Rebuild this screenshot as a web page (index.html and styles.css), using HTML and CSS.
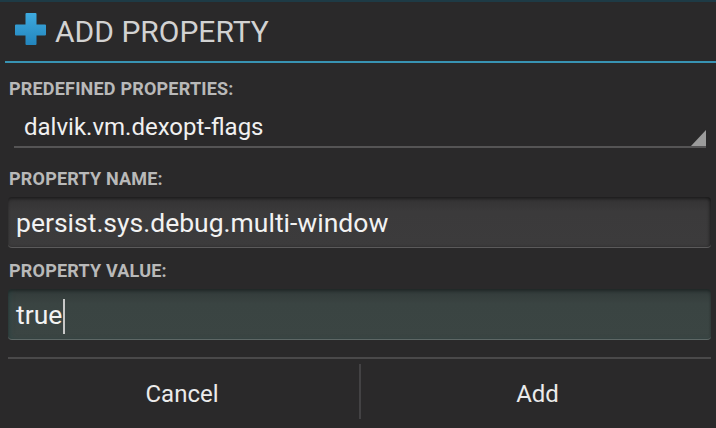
FILE: index.html
```html
<!DOCTYPE html>
<html>
<head>
<meta charset="utf-8">
<link rel="stylesheet" href="styles.css">
</head>
<body>
<div class="dialog">
  <div class="title-bar">
    <svg class="plus-icon" width="32" height="32" viewBox="0 0 32 32">
      <defs>
        <linearGradient id="pg" x1="0" y1="0" x2="0" y2="1">
          <stop offset="0" stop-color="#3eaadf"/>
          <stop offset="1" stop-color="#2385bd"/>
        </linearGradient>
      </defs>
      <path d="M10.5 1 Q10.5 0 11.5 0 H20.5 Q21.5 0 21.5 1 V11.5 H30 Q31 11.5 31 12.5 V21.5 Q31 22.5 30 22.5 H21.5 V31 Q21.5 32 20.5 32 H11.5 Q10.5 32 10.5 31 V22.5 H1 Q0 22.5 0 21.5 V12.5 Q0 11.5 1 11.5 H10.5 Z" fill="url(#pg)"/>
    </svg>
    <span class="title">ADD PROPERTY</span>
  </div>
  <div class="title-divider"></div>
  <div class="content">
    <div class="label label-first">PREDEFINED PROPERTIES:</div>
    <div class="spinner">
      <span class="spinner-text">dalvik.vm.dexopt-flags</span>
      <span class="spinner-arrow"></span>
    </div>
    <div class="label label-after-spinner">PROPERTY NAME:</div>
    <div class="field">persist.sys.debug.multi-window</div>
    <div class="label label-after-field">PROPERTY VALUE:</div>
    <div class="field field-focused">true<span class="cursor"></span></div>
  </div>
  <div class="button-divider"></div>
  <div class="buttons">
    <button class="btn btn-left">Cancel</button>
    <span class="btn-sep"></span>
    <button class="btn btn-right">Add</button>
  </div>
</div>
</body>
</html>
```
FILE: styles.css
```css
html, body {
  margin: 0;
  padding: 0;
  background: #2a292a;
}
body {
  width: 716px;
  height: 428px;
  overflow: hidden;
  font-family: Roboto, "Liberation Sans", sans-serif;
}
.dialog {
  display: flex;
  flex-direction: column;
  height: 428px;
  box-sizing: border-box;
  border-top: 2px solid #1e3b46;
}
.title-bar {
  height: 59px;
  box-sizing: border-box;
  display: flex;
  align-items: flex-start;
  padding: 11px 0 0 15px;
  gap: 8px;
}
.plus-icon {
  display: block;
  flex: none;
}
.title {
  font-size: 30px;
  line-height: 36px;
  margin-top: 1px;
  color: #d2d2d2;
  font-weight: 400;
}
.title-divider {
  height: 2px;
  margin-left: 5px;
  background: #3893b3;
}
.content {
  padding: 0 5px 0 8px;
}
.label {
  font-size: 18px;
  line-height: 20px;
  font-weight: 700;
  letter-spacing: 0.2px;
  color: #b9b9b9;
  padding-left: 1px;
}
.label-first { margin-top: 16px; }
.label-after-spinner { margin-top: 21px; }
.label-after-field { margin-top: 13px; }
.spinner {
  display: flex;
  align-items: flex-end;
  justify-content: space-between;
  margin: 0 5px 0 6px;
  padding: 13px 0 0 10px;
  border-bottom: 2px solid #555455;
}
.spinner-text {
  font-size: 24px;
  line-height: 30px;
  color: #f0f0f0;
  padding-bottom: 4px;
}
.spinner-arrow {
  width: 15px;
  height: 16px;
  background: #9b9b9b;
  clip-path: polygon(100% 0, 100% 100%, 0 100%);
}
.field {
  margin-top: 8px;
  height: 51px;
  box-sizing: border-box;
  padding: 11px 0 0 8px;
  font-size: 26.5px;
  line-height: 30px;
  color: #f2f2f2;
  border-radius: 4px;
  background: linear-gradient(#333233, #3b3a3b 30%, #3c3b3c);
  border-bottom: 1px solid #5b5a5b;
  box-shadow: inset 0 2px 3px rgba(0, 0, 0, 0.35), inset -2px 0 3px rgba(0, 0, 0, 0.25);
}
.field-focused {
  background: linear-gradient(#323a39, #3a4442 30%, #3b4543);
  border-bottom: 1px solid #5e6866;
  box-shadow: inset 0 2px 3px rgba(0, 0, 0, 0.35), inset 3px 0 4px rgba(40, 70, 70, 0.4);
}
.cursor {
  display: inline-block;
  width: 2px;
  height: 35px;
  background: #c8c8c8;
  vertical-align: -8px;
  margin: -5px 0 -2px 1px;
}
.button-divider {
  margin: 17px 5px 0 8px;
  height: 2px;
  background: #4a494a;
}
.buttons {
  flex: 1;
  display: flex;
}
.btn {
  background: transparent;
  border: none;
  padding: 0;
  font-family: Roboto, "Liberation Sans", sans-serif;
  font-size: 24px;
  color: #ebebeb;
  box-sizing: border-box;
}
.btn-left {
  flex: 0 0 359px;
  padding-left: 5px;
}
.btn-right {
  flex: 1;
  padding-right: 2px;
}
.btn-sep {
  flex: none;
  width: 2px;
  margin: 5px 0 9px;
  background: #434244;
}
```
